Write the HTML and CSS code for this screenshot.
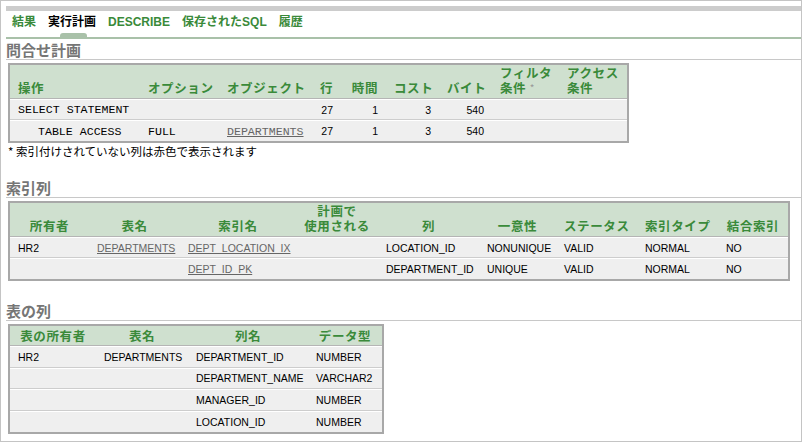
FILE: index.html
```html
<!DOCTYPE html>
<html lang="ja">
<head>
<meta charset="utf-8">
<title>実行計画</title>
<link rel="stylesheet" href="styles.css">
</head>
<body>
<div class="page">
  <div class="topbar"></div>
  <nav class="tabs">
    <span class="tab">結果</span>
    <span class="tab active">実行計画</span>
    <span class="tab">DESCRIBE</span>
    <span class="tab">保存されたSQL</span>
    <span class="tab">履歴</span>
  </nav>
  <div class="tabline"></div>

  <h2 class="sec-h first">問合せ計画</h2>
  <table class="grid plan">
    <colgroup>
      <col class="p1"><col class="p2"><col class="p3"><col class="p4"><col class="p5"><col class="p6"><col class="p7"><col class="p8"><col class="p9">
    </colgroup>
    <thead>
      <tr>
        <th>操作</th>
        <th>オプション</th>
        <th>オブジェクト</th>
        <th class="num">行</th>
        <th class="num">時間</th>
        <th class="num">コスト</th>
        <th class="num">バイト</th>
        <th>フィルタ<br>条件 <span class="star">*</span></th>
        <th>アクセス<br>条件</th>
      </tr>
    </thead>
    <tbody>
      <tr>
        <td class="mono">SELECT STATEMENT</td>
        <td class="mono"></td>
        <td class="mono"></td>
        <td class="num">27</td>
        <td class="num">1</td>
        <td class="num">3</td>
        <td class="num">540</td>
        <td></td>
        <td></td>
      </tr>
      <tr>
        <td class="mono indent">TABLE ACCESS</td>
        <td class="mono">FULL</td>
        <td class="mono"><a href="#">DEPARTMENTS</a></td>
        <td class="num">27</td>
        <td class="num">1</td>
        <td class="num">3</td>
        <td class="num">540</td>
        <td></td>
        <td></td>
      </tr>
    </tbody>
  </table>
  <p class="note">* 索引付けされていない列は赤色で表示されます</p>

  <h2 class="sec-h second">索引列</h2>
  <table class="grid idx">
    <colgroup>
      <col class="i1"><col class="i2"><col class="i3"><col class="i4"><col class="i5"><col class="i6"><col class="i7"><col class="i8"><col class="i9">
    </colgroup>
    <thead>
      <tr>
        <th>所有者</th>
        <th>表名</th>
        <th>索引名</th>
        <th>計画で<br>使用される</th>
        <th>列</th>
        <th>一意性</th>
        <th>ステータス</th>
        <th>索引タイプ</th>
        <th>結合索引</th>
      </tr>
    </thead>
    <tbody>
      <tr>
        <td>HR2</td>
        <td><a href="#">DEPARTMENTS</a></td>
        <td><a href="#">DEPT_LOCATION_IX</a></td>
        <td></td>
        <td>LOCATION_ID</td>
        <td>NONUNIQUE</td>
        <td>VALID</td>
        <td>NORMAL</td>
        <td>NO</td>
      </tr>
      <tr>
        <td></td>
        <td></td>
        <td><a href="#">DEPT_ID_PK</a></td>
        <td></td>
        <td>DEPARTMENT_ID</td>
        <td>UNIQUE</td>
        <td>VALID</td>
        <td>NORMAL</td>
        <td>NO</td>
      </tr>
    </tbody>
  </table>

  <h2 class="sec-h third">表の列</h2>
  <table class="grid cols">
    <colgroup>
      <col class="c1"><col class="c2"><col class="c3"><col class="c4">
    </colgroup>
    <thead>
      <tr>
        <th>表の所有者</th>
        <th>表名</th>
        <th>列名</th>
        <th>データ型</th>
      </tr>
    </thead>
    <tbody>
      <tr><td>HR2</td><td>DEPARTMENTS</td><td>DEPARTMENT_ID</td><td>NUMBER</td></tr>
      <tr><td></td><td></td><td>DEPARTMENT_NAME</td><td>VARCHAR2</td></tr>
      <tr><td></td><td></td><td>MANAGER_ID</td><td>NUMBER</td></tr>
      <tr><td></td><td></td><td>LOCATION_ID</td><td>NUMBER</td></tr>
    </tbody>
  </table>
</div>
</body>
</html>
```
FILE: styles.css
```css
* { box-sizing: border-box; }
html, body { margin: 0; padding: 0; background: #fff; }
body {
  font-family: "Liberation Sans", "Noto Sans CJK JP", sans-serif;
  color: #000;
}
.page {
  width: 802px;
  height: 442px;
  border: 1px solid #c4c4c4;
  padding: 5px 0 0 5px;
  overflow: hidden;
}
.topbar { height: 5px; background: #cccccc; }

.tabs {
  display: flex;
  align-items: stretch;
  gap: 12px;
  height: 26px;
  padding: 0 0 0 6px;
  font-family: "Liberation Sans", "Noto Sans CJK JP", sans-serif;
  font-size: 12px;
  font-weight: bold;
  line-height: 16px;
  overflow: hidden;
}
.tab { color: #3a8a3a; position: relative; padding-top: 3px; }
.tab.active { color: #000; }
.tab.active::after {
  content: "";
  position: absolute;
  left: 50%;
  bottom: 0;
  width: 27px;
  height: 4px;
  margin-left: -12px;
  background: #a9c1a9;
  border-radius: 3px 3px 0 0;
}
.tabline { height: 2px; background: #a9c1a9; }

.sec-h {
  margin: 0;
  padding-top: 2px;
  font-family: "Noto Sans CJK JP", sans-serif;
  font-size: 15px;
  line-height: 18px;
  font-weight: bold;
  color: #767676;
  border-bottom: 1px solid #c8c8c8;
}
.sec-h.second { margin-top: 18px; }
.sec-h.third { margin-top: 19px; }

.grid {
  border-spacing: 0;
  border: 2px solid #a8a8a8;
  table-layout: fixed;
  margin: 3px 0 0 2px;
}
.grid th {
  background: #cfe0cf;
  color: #3a8a3a;
  font-family: "Noto Sans CJK JP", sans-serif;
  font-size: 12.5px;
  font-weight: bold;
  letter-spacing: 0.6px;
  line-height: 15px;
  vertical-align: bottom;
  padding: 0 8px 3px;
  white-space: nowrap;
  border-bottom: 1px solid #b5b5b5;
}
.grid td {
  background: #efefef;
  font-family: "Liberation Sans", sans-serif;
  font-size: 10.5px;
  padding: 0 8px;
  border-top: 1px solid #fff;
  white-space: nowrap;
  vertical-align: middle;
}
.grid tbody tr:not(:last-child) td { border-bottom: 1px solid #cdcdcd; }
.grid a { color: #666; text-decoration: underline; }
.grid .num { text-align: right; }
.grid td.mono {
  font-family: "Liberation Mono", monospace;
  font-size: 11.6px;
}
.grid td.indent { padding-left: 28px; }
.star { color: #999; font-size: 10px; font-weight: normal; vertical-align: top; }

/* plan table */
.plan { width: 621px; }
.plan th { height: 34px; text-align: left; }
.plan th.num { text-align: right; }
.plan td { height: 21px; }
.p1 { width: 130px; } .p2 { width: 79px; } .p3 { width: 93px; }
.p4 { width: 29px; } .p5 { width: 45px; } .p6 { width: 53px; }
.p7 { width: 53px; } .p8 { width: 67px; } .p9 { width: 68px; }

.note {
  margin: 0 0 0 2px;
  font-family: "Noto Sans CJK JP", sans-serif;
  font-size: 11.5px;
  line-height: 16px;
}

/* index table */
.idx { width: 782px; }
.idx th { height: 33px; text-align: center; }
.idx td { height: 21px; }
.i1 { width: 79px; } .i2 { width: 91px; } .i3 { width: 116px; }
.i4 { width: 82px; } .i5 { width: 101px; } .i6 { width: 77px; }
.i7 { width: 81px; } .i8 { width: 81px; } .i9 { width: 70px; }

/* columns table */
.cols { width: 376px; }
.cols th { height: 20px; text-align: center; padding-bottom: 2px; }
.cols td { height: 21.5px; }
.c1 { width: 86px; } .c2 { width: 92px; } .c3 { width: 120px; } .c4 { width: 74px; }
```
